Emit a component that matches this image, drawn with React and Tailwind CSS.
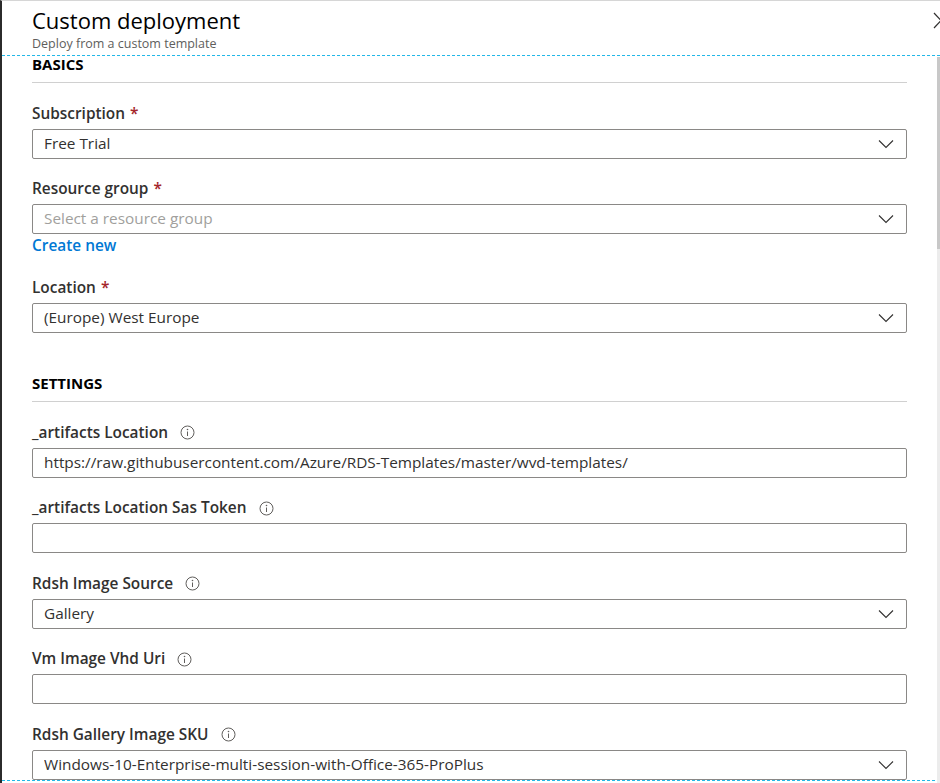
import React from "react";

const Chevron = () => (
  <svg width="16" height="10" viewBox="0 0 16 10" className="shrink-0">
    <path d="M1 1.5 L8 8.5 L15 1.5" fill="none" stroke="#323130" strokeWidth="1.1" />
  </svg>
);

const Info = () => (
  <svg width="15" height="15" viewBox="0 0 15 15" className="ml-[12px]">
    <circle cx="7.5" cy="7.5" r="6.5" fill="none" stroke="#605e5c" strokeWidth="1" />
    <circle cx="7.5" cy="4.5" r="0.8" fill="#605e5c" />
    <path d="M7.5 6.5 V11" stroke="#605e5c" strokeWidth="1" />
  </svg>
);

function Field({ label, required, info, value, placeholder, select, children, first }) {
  return (
    <div className={first ? "mt-[20px]" : "mt-[19.5px]"}>
      <div className="flex items-center h-[22px] mb-[4px] text-[15.4px] font-semibold text-[#323130]">
        <span>{label}</span>
        {required && <span className="ml-[5px] text-[#a4262c]">*</span>}
        {info && <Info />}
      </div>
      <div className="flex items-center h-[30px] border border-[#8a8886] rounded-[2px] pl-[11px] pr-[12px] text-[15.35px]">
        <span className={`flex-1 truncate ${value ? "text-[#323130]" : "text-[#a19f9d]"}`}>
          {value || placeholder}
        </span>
        {select && <Chevron />}
      </div>
      {children}
    </div>
  );
}

function Section({ title, className }) {
  return (
    <div className={className}>
      <div className="h-[16px] leading-[16px] text-[15px] font-bold text-black">{title}</div>
      <div className="mt-[10px] border-b border-[#d0d0d0]" />
    </div>
  );
}

export default function App() {
  return (
    <div className="relative w-[940px] h-[783px] overflow-hidden bg-white border-l-2 border-l-[#2b2b2b] border-t border-t-[#d6d6d6] font-['Segoe_UI','Open_Sans',sans-serif]">
      <div className="h-[55px] border-b border-dashed border-[#22b8e8] pl-[30px]">
        <div className="pt-[4px] text-[22px] leading-[30px] text-black">Custom deployment</div>
        <div className="text-[12.5px] leading-[17px] text-[#605e5c]">Deploy from a custom template</div>
      </div>
      <div className="h-[725px] border-b border-dashed border-[#22b8e8]">
        <div className="w-[905px] pl-[30px] -mt-[0.5px]">
          <Section title="BASICS" />
          <Field first label="Subscription" required select value="Free Trial" />
          <Field label="Resource group" required select placeholder="Select a resource group">
            <div className="mt-[1px] h-[22px] leading-[22px] text-[15.4px] font-semibold text-[#0078d4]">Create new</div>
          </Field>
          <Field label="Location" required select value="(Europe) West Europe" />
          <Section title="SETTINGS" className="mt-[42px]" />
          <Field first label="_artifacts Location" info value="https://raw.githubusercontent.com/Azure/RDS-Templates/master/wvd-templates/" />
          <Field label="_artifacts Location Sas Token" info />
          <Field label="Rdsh Image Source" info select value="Gallery" />
          <Field label="Vm Image Vhd Uri" info />
          <Field label="Rdsh Gallery Image SKU" info select value="Windows-10-Enterprise-multi-session-with-Office-365-ProPlus" />
        </div>
      </div>
      <svg width="10" height="18" viewBox="0 0 10 18" className="absolute left-[931px] top-[11px]">
        <path d="M1 1 L8 8.5 L1 16" fill="none" stroke="#323130" strokeWidth="1.2" />
      </svg>
      <div className="absolute right-0 top-[56px] w-[3px] h-[726px] bg-[#ececec]">
        <div className="h-[192px] bg-[#c8c8c8]" />
      </div>
    </div>
  );
}
